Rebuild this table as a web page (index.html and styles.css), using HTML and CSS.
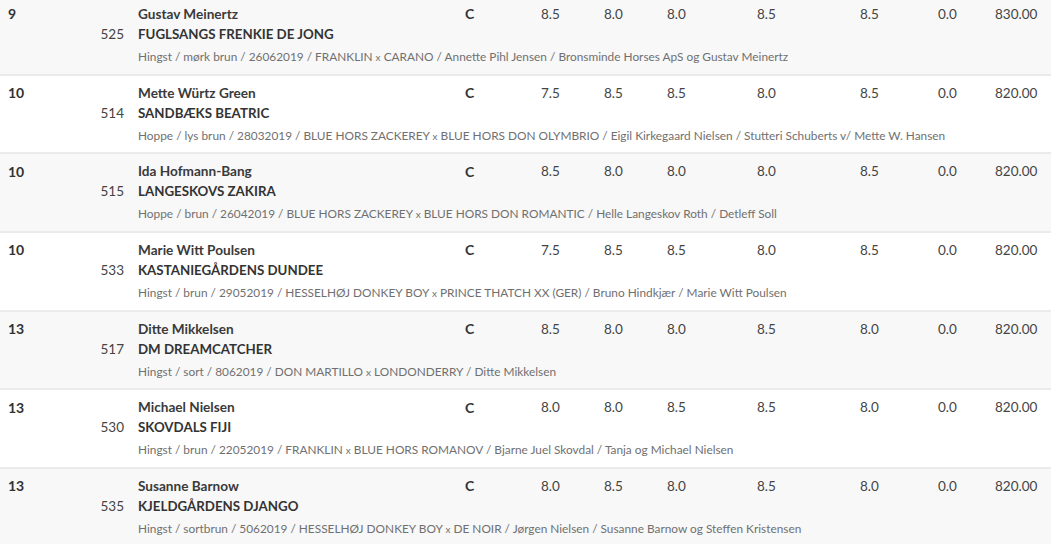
FILE: index.html
```html
<!DOCTYPE html>
<html lang="da">
<head>
<meta charset="utf-8">
<title>Resultater</title>
<link rel="stylesheet" href="styles.css">
</head>
<body>
<div class="results">
  <div class="row alt">
    <div class="rank">9</div><div class="rider">Gustav Meinertz</div><div class="cls">C</div>
    <div class="s s1">8.5</div><div class="s s2">8.0</div><div class="s s3">8.0</div><div class="s s4">8.5</div><div class="s s5">8.5</div><div class="s s6">0.0</div><div class="s s7">830.00</div>
    <div class="num">525</div><div class="horse">FUGLSANGS FRENKIE DE JONG</div>
    <div class="info">Hingst / mørk brun / 26062019 / FRANKLIN <span class="x">x</span> CARANO / Annette Pihl Jensen / Bronsminde Horses ApS og Gustav Meinertz</div>
  </div>
  <div class="row">
    <div class="rank">10</div><div class="rider">Mette Würtz Green</div><div class="cls">C</div>
    <div class="s s1">7.5</div><div class="s s2">8.5</div><div class="s s3">8.5</div><div class="s s4">8.0</div><div class="s s5">8.5</div><div class="s s6">0.0</div><div class="s s7">820.00</div>
    <div class="num">514</div><div class="horse">SANDBÆKS BEATRIC</div>
    <div class="info">Hoppe / lys brun / 28032019 / BLUE HORS ZACKEREY <span class="x">x</span> BLUE HORS DON OLYMBRIO / Eigil Kirkegaard Nielsen / Stutteri Schuberts v/ Mette W. Hansen</div>
  </div>
  <div class="row alt">
    <div class="rank">10</div><div class="rider">Ida Hofmann-Bang</div><div class="cls">C</div>
    <div class="s s1">8.5</div><div class="s s2">8.0</div><div class="s s3">8.0</div><div class="s s4">8.0</div><div class="s s5">8.5</div><div class="s s6">0.0</div><div class="s s7">820.00</div>
    <div class="num">515</div><div class="horse">LANGESKOVS ZAKIRA</div>
    <div class="info">Hoppe / brun / 26042019 / BLUE HORS ZACKEREY <span class="x">x</span> BLUE HORS DON ROMANTIC / Helle Langeskov Roth / Detleff Soll</div>
  </div>
  <div class="row">
    <div class="rank">10</div><div class="rider">Marie Witt Poulsen</div><div class="cls">C</div>
    <div class="s s1">7.5</div><div class="s s2">8.5</div><div class="s s3">8.5</div><div class="s s4">8.0</div><div class="s s5">8.5</div><div class="s s6">0.0</div><div class="s s7">820.00</div>
    <div class="num">533</div><div class="horse">KASTANIEGÅRDENS DUNDEE</div>
    <div class="info">Hingst / brun / 29052019 / HESSELHØJ DONKEY BOY <span class="x">x</span> PRINCE THATCH XX (GER) / Bruno Hindkjær / Marie Witt Poulsen</div>
  </div>
  <div class="row alt">
    <div class="rank">13</div><div class="rider">Ditte Mikkelsen</div><div class="cls">C</div>
    <div class="s s1">8.5</div><div class="s s2">8.0</div><div class="s s3">8.0</div><div class="s s4">8.5</div><div class="s s5">8.0</div><div class="s s6">0.0</div><div class="s s7">820.00</div>
    <div class="num">517</div><div class="horse">DM DREAMCATCHER</div>
    <div class="info">Hingst / sort / 8062019 / DON MARTILLO <span class="x">x</span> LONDONDERRY / Ditte Mikkelsen</div>
  </div>
  <div class="row">
    <div class="rank">13</div><div class="rider">Michael Nielsen</div><div class="cls">C</div>
    <div class="s s1">8.0</div><div class="s s2">8.0</div><div class="s s3">8.5</div><div class="s s4">8.5</div><div class="s s5">8.0</div><div class="s s6">0.0</div><div class="s s7">820.00</div>
    <div class="num">530</div><div class="horse">SKOVDALS FIJI</div>
    <div class="info">Hingst / brun / 22052019 / FRANKLIN <span class="x">x</span> BLUE HORS ROMANOV / Bjarne Juel Skovdal / Tanja og Michael Nielsen</div>
  </div>
  <div class="row alt">
    <div class="rank">13</div><div class="rider">Susanne Barnow</div><div class="cls">C</div>
    <div class="s s1">8.0</div><div class="s s2">8.5</div><div class="s s3">8.0</div><div class="s s4">8.5</div><div class="s s5">8.0</div><div class="s s6">0.0</div><div class="s s7">820.00</div>
    <div class="num">535</div><div class="horse">KJELDGÅRDENS DJANGO</div>
    <div class="info">Hingst / sortbrun / 5062019 / HESSELHØJ DONKEY BOY <span class="x">x</span> DE NOIR / Jørgen Nielsen / Susanne Barnow og Steffen Kristensen</div>
  </div>
</div>
</body>
</html>
```

FILE: styles.css
```css
html, body {
  margin: 0;
  padding: 0;
  background: #ffffff;
}
body {
  font-family: Lato, "Open Sans", "Liberation Sans", sans-serif;
  color: #333;
  overflow: hidden;
}
.results {
  margin-top: -3.2px;
}
.row {
  display: grid;
  grid-template-columns: 52px 64px 14px 327px 76px 63px 63px 90px 103px 78px 57px 56px;
  grid-template-rows: 20px 20px 25px;
  padding: 7px 0 0 8px;
  height: 78.7px;
  box-sizing: border-box;
  border-bottom: 2px solid #ebebeb;
  background: #fff;
  align-items: center;
}
.row.alt {
  background: #f8f8f8;
}
.rank {
  grid-column: 1;
  grid-row: 1;
  font-weight: 700;
  font-size: 14px;
  color: #333;
}
.rider {
  grid-column: 4;
  grid-row: 1;
  font-weight: 700;
  font-size: 13.6px;
  color: #3a3a3a;
}
.cls {
  grid-column: 5;
  grid-row: 1;
  font-weight: 700;
  font-size: 14px;
  color: #333;
}
.s {
  grid-row: 1;
  font-size: 13.5px;
  color: #444;
}
.s1 { grid-column: 6; }
.s2 { grid-column: 7; }
.s3 { grid-column: 8; }
.s4 { grid-column: 9; }
.s5 { grid-column: 10; }
.s6 { grid-column: 11; }
.s7 { grid-column: 12; }
.num {
  grid-column: 2;
  grid-row: 2;
  text-align: right;
  font-size: 13.5px;
  color: #444;
}
.horse {
  grid-column: 4 / span 4;
  grid-row: 2;
  font-weight: 700;
  font-size: 13.3px;
  color: #333;
  white-space: nowrap;
}
.info {
  grid-column: 4 / -1;
  grid-row: 3;
  font-size: 11.85px;
  color: #707070;
  white-space: nowrap;
}
.x {
  font-size: 10px;
}
```
